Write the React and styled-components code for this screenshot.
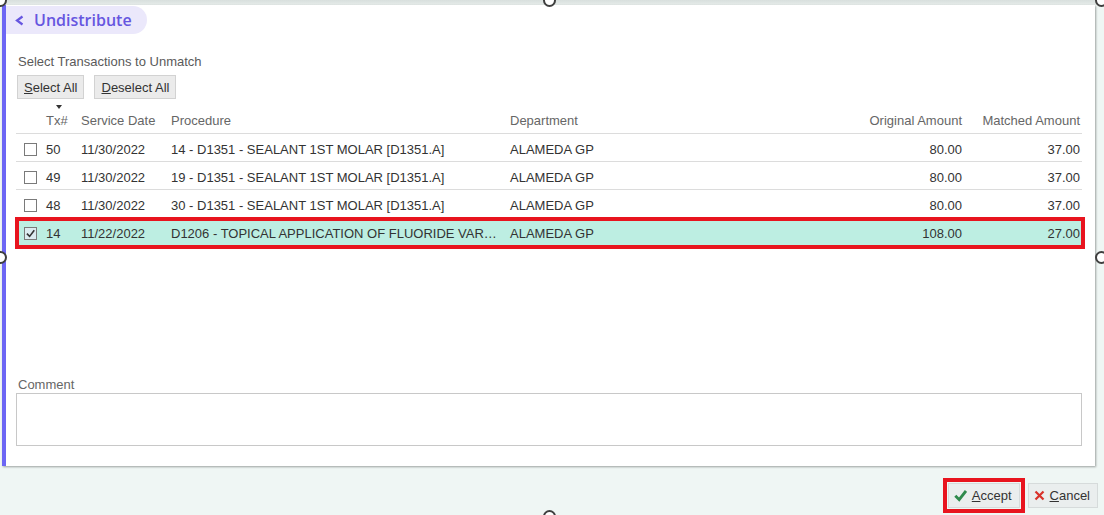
import React from "react";
import styled, { createGlobalStyle } from "styled-components";

const GlobalStyle = createGlobalStyle`
  html, body { margin: 0; padding: 0; }
  body {
    font-family: "Liberation Sans", Arial, sans-serif;
    background: #eff6f4;
    overflow: hidden;
  }
`;

const Page = styled.div`
  position: relative;
  width: 1104px;
  height: 515px;
  background: #eff6f4;
  display: flex;
  flex-direction: column;
  overflow: hidden;
`;

const TopBand = styled.div`
  height: 5px;
  background: linear-gradient(#d8dfdd, #e6ecea);
`;

const Panel = styled.section`
  width: 1093px;
  height: 461px;
  margin-left: 2px;
  background: #ffffff;
  border-left: 4px solid #6c66f4;
  box-shadow: 1px 1px 2px rgba(0, 0, 0, 0.35);
  display: flex;
  flex-direction: column;
  box-sizing: border-box;
  padding: 1px 13px 20px 0;
`;

const Pill = styled.div`
  align-self: flex-start;
  height: 28px;
  padding: 0 15px 0 9px;
  display: flex;
  align-items: center;
  gap: 10px;
  background: #ebe8fb;
  border-radius: 0 14px 14px 0;
  color: #6656e0;
  font-family: "Open Sans", "Liberation Sans", sans-serif;
  font-weight: 600;
  font-size: 16px;
`;

const Body = styled.div`
  flex: 1;
  display: flex;
  flex-direction: column;
  padding-left: 10px;
`;

const Hint = styled.div`
  margin-top: 20px;
  font-size: 13px;
  line-height: 15px;
  color: #5a5a5a;
  padding-left: 2px;
`;

const ButtonRow = styled.div`
  display: flex;
  gap: 10px;
  margin-top: 6px;
  padding-left: 1px;
`;

const GreyButton = styled.button`
  height: 24px;
  padding: 0 6px;
  background: #ebebeb;
  border: 1px solid #d2d2d2;
  font-family: "Liberation Sans", Arial, sans-serif;
  font-size: 13px;
  color: #333;
  display: flex;
  align-items: center;
  cursor: pointer;

  u { text-decoration: underline; }
`;

const cols = "26px 35px 90px 339px 1fr 110px 118px";

const HeadRow = styled.div`
  display: grid;
  grid-template-columns: ${cols};
  margin-top: 2px;
  padding-top: 12px;
  height: 33px;
  box-sizing: border-box;
  border-bottom: 1px solid #dcdcdc;
  font-size: 13px;
  color: #666;
`;

const HeadCell = styled.div`
  position: relative;
  padding: 0 ${p => (p.$right ? "2px" : "0")} 0 ${p => (p.$right ? "0" : "4px")};
  text-align: ${p => (p.$right ? "right" : "left")};
  line-height: 15px;
`;

const SortArrow = styled.span`
  position: absolute;
  left: 14px;
  top: -8px;
  width: 0;
  height: 0;
  border-left: 3px solid transparent;
  border-right: 3px solid transparent;
  border-top: 4px solid #333;
`;

const Row = styled.div`
  position: relative;
  display: grid;
  grid-template-columns: ${cols};
  height: 28px;
  padding-top: 3px;
  box-sizing: border-box;
  align-items: center;
  border-bottom: 1px solid ${p => (p.$selected ? "transparent" : "#dcdcdc")};
  background: ${p => (p.$selected ? "#bdeee2" : "#fff")};
  font-size: 13px;
  color: #333;

  ${p =>
    p.$selected &&
    `
    &::after {
      content: "";
      position: absolute;
      left: -1px;
      right: -3px;
      top: -1px;
      bottom: -4px;
      border: 4px solid #e8141e;
      pointer-events: none;
    }
  `}
`;

const Cell = styled.div`
  padding: 0 ${p => (p.$right ? "2px" : "0")} 0 ${p => (p.$right ? "0" : "4px")};
  text-align: ${p => (p.$right ? "right" : "left")};
  white-space: nowrap;
  overflow: hidden;
  text-overflow: ellipsis;
`;

const CheckCell = styled.div`
  padding-left: 8px;
  display: flex;
  align-items: center;
`;

const Box = styled.span`
  width: 11px;
  height: 11px;
  border: 1px solid #7a7a7a;
  background: ${p => (p.$checked ? "#dcebf0" : "#fff")};
  display: flex;
  align-items: center;
  justify-content: center;
`;

const Spacer = styled.div`
  flex: 1;
`;

const Label = styled.div`
  font-size: 13px;
  color: #666;
  line-height: 13px;
  padding-left: 2px;
  margin-bottom: 2px;
`;

const CommentBox = styled.textarea`
  height: 53px;
  box-sizing: border-box;
  border: 1px solid #c8c8c8;
  resize: none;
  font-family: inherit;
  outline: none;
`;

const Footer = styled.div`
  flex: 1;
  display: flex;
  justify-content: flex-end;
  align-items: center;
  padding: 10px 6px 0 0;
  gap: 3px;
`;

const Highlight = styled.div`
  border: 4px solid #e8141e;
  padding: 1px;
  display: flex;
`;

const ActionButton = styled.button`
  height: 25px;
  padding: 0 7px 0 5px;
  background: #eaeeee;
  border: 1px solid #d6dbdb;
  font-family: "Liberation Sans", Arial, sans-serif;
  font-size: 13px;
  color: #333;
  display: flex;
  align-items: center;
  gap: 5px;
  cursor: pointer;
`;

const Handle = styled.span`
  position: absolute;
  width: 9px;
  height: 9px;
  border: 2px solid #3f3f3f;
  border-radius: 50%;
  background: #fff;
  left: ${p => p.$x - 6}px;
  top: ${p => p.$y - 6}px;
`;

const rows = [
  { tx: "50", date: "11/30/2022", proc: "14 - D1351 - SEALANT 1ST MOLAR [D1351.A]", dept: "ALAMEDA GP", orig: "80.00", matched: "37.00" },
  { tx: "49", date: "11/30/2022", proc: "19 - D1351 - SEALANT 1ST MOLAR [D1351.A]", dept: "ALAMEDA GP", orig: "80.00", matched: "37.00" },
  { tx: "48", date: "11/30/2022", proc: "30 - D1351 - SEALANT 1ST MOLAR [D1351.A]", dept: "ALAMEDA GP", orig: "80.00", matched: "37.00" },
  { tx: "14", date: "11/22/2022", proc: "D1206 - TOPICAL APPLICATION OF FLUORIDE VARNISH", dept: "ALAMEDA GP", orig: "108.00", matched: "27.00", checked: true },
];

const Chevron = () => (
  <svg width="9" height="11" viewBox="0 0 9 11">
    <path d="M7.5 1.5 L2 5.5 L7.5 9.5" fill="none" stroke="#6656e0" strokeWidth="2.2" />
  </svg>
);

const Tick = ({ color = "#333", size = 9, w = 1.8 }) => (
  <svg width={size} height={size} viewBox="0 0 10 10">
    <path d="M1 5.2 L4 8.2 L9.2 1.5" fill="none" stroke={color} strokeWidth={w} />
  </svg>
);

const Cross = () => (
  <svg width="11" height="11" viewBox="0 0 11 11">
    <path d="M1.5 1.5 L9.5 9.5 M9.5 1.5 L1.5 9.5" stroke="#d8322a" strokeWidth="2.2" />
  </svg>
);

export default function App() {
  return (
    <Page>
      <GlobalStyle />
      <TopBand />
      <Panel>
        <Pill>
          <Chevron />
          Undistribute
        </Pill>
        <Body>
          <Hint>Select Transactions to Unmatch</Hint>
          <ButtonRow>
            <GreyButton><span><u>S</u>elect All</span></GreyButton>
            <GreyButton><span><u>D</u>eselect All</span></GreyButton>
          </ButtonRow>
          <HeadRow>
            <HeadCell />
            <HeadCell>
              <SortArrow />
              Tx#
            </HeadCell>
            <HeadCell>Service Date</HeadCell>
            <HeadCell>Procedure</HeadCell>
            <HeadCell>Department</HeadCell>
            <HeadCell $right>Original Amount</HeadCell>
            <HeadCell $right>Matched Amount</HeadCell>
          </HeadRow>
          {rows.map(r => (
            <Row key={r.tx} $selected={r.checked}>
              <CheckCell>
                <Box $checked={r.checked}>{r.checked && <Tick />}</Box>
              </CheckCell>
              <Cell>{r.tx}</Cell>
              <Cell>{r.date}</Cell>
              <Cell title={r.proc}>{r.proc}</Cell>
              <Cell>{r.dept}</Cell>
              <Cell $right>{r.orig}</Cell>
              <Cell $right>{r.matched}</Cell>
            </Row>
          ))}
          <Spacer />
          <Label>Comment</Label>
          <CommentBox />
        </Body>
      </Panel>
      <Footer>
        <Highlight>
          <ActionButton>
            <Tick color="#2f8a4c" size={13} w={2.2} />
            <span><u>A</u>ccept</span>
          </ActionButton>
        </Highlight>
        <ActionButton>
          <Cross />
          <span><u>C</u>ancel</span>
        </ActionButton>
      </Footer>
      <Handle $x={0} $y={0} />
      <Handle $x={549} $y={0} />
      <Handle $x={1101} $y={0} />
      <Handle $x={0} $y={257} />
      <Handle $x={1101} $y={257} />
      <Handle $x={549} $y={516} />
    </Page>
  );
}
